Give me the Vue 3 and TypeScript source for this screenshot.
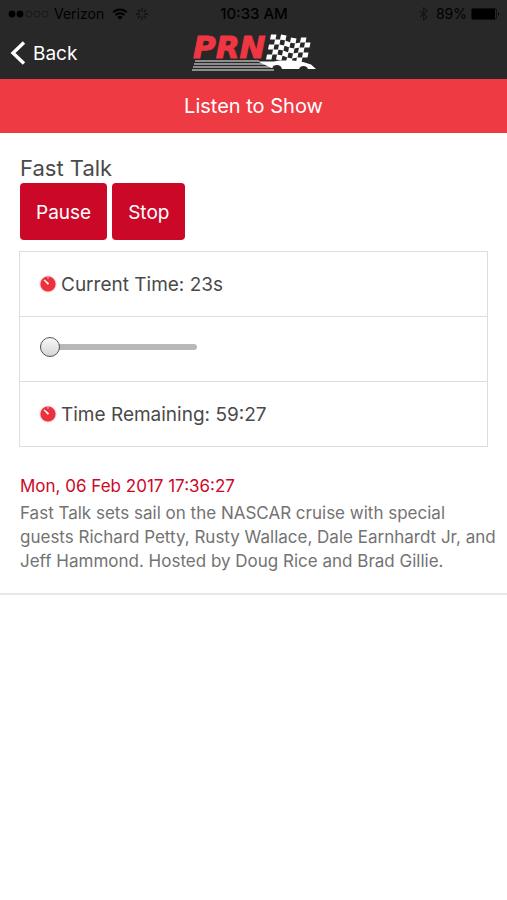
<script setup lang="ts">
import { computed, ref } from 'vue'

const duration = 3590
const elapsed = ref(23)

function format(seconds: number): string {
  const s = Math.max(0, seconds)
  if (s < 60) return `${s}s`
  return `${Math.floor(s / 60)}:${String(s % 60).padStart(2, '0')}`
}

const currentTime = computed(() => format(elapsed.value))
const remaining = computed(() => format(duration - elapsed.value))

const flagSquares = Array.from({ length: 40 }, (_, i) => ({ row: Math.floor(i / 8), col: i % 8 }))
  .filter(({ row, col }) => (row + col) % 2 === 0)
  .map(({ row, col }) => {
    const wave = [0, 0, 0, 1, 3, 4, 3, 3, 3]
    const x = 81 + col * 5 - row
    const y = 0.5 + row * 5
    const a = wave[col]
    const b = wave[col + 1]
    return `M${x} ${y + a}L${x + 5.5} ${y + b}L${x + 4.5} ${y + b + 5}L${x - 1} ${y + a + 5}Z`
  })
  .join('')
</script>

<template>
  <div class="screen">
    <header class="top">
      <div class="status">
        <div class="status-left">
          <svg class="signal" width="42" height="10" viewBox="0 0 42 10" aria-hidden="true">
            <circle cx="4" cy="5" r="3.4" fill="#000" />
            <circle cx="12" cy="5" r="3.4" fill="#000" />
            <g fill="none" stroke="#151515" stroke-width="0.8">
              <circle cx="21" cy="5" r="3" />
              <circle cx="29" cy="5" r="3" />
              <circle cx="37" cy="5" r="3" />
            </g>
          </svg>
          <span>Verizon</span>
          <svg class="wifi" width="16" height="12" viewBox="0 0 16 12" aria-hidden="true">
            <path d="M1.2 4.4a9.6 9.6 0 0 1 13.6 0M3.6 7a6.2 6.2 0 0 1 8.8 0" fill="none" stroke="#000" stroke-width="2" />
            <path d="M5.4 9a3.8 3.8 0 0 1 5.2 0L8 11.7z" fill="#000" />
          </svg>
          <svg width="12" height="12" viewBox="0 0 12 12" aria-hidden="true">
            <path d="M6 0v3.5M6 8.5V12M0 6h3.5M8.5 6H12M1.8 1.8l2.4 2.4M7.8 7.8l2.4 2.4M1.8 10.2l2.4-2.4M7.8 4.2l2.4-2.4" stroke="#111" stroke-width="1.3" />
          </svg>
        </div>
        <span class="clock">10:33 AM</span>
        <div class="status-right">
          <svg width="9" height="14" viewBox="0 0 9 14" aria-hidden="true">
            <path d="M1 4l7 6-3.5 3V1L8 4l-7 6" fill="none" stroke="#151515" stroke-width="1.1" />
          </svg>
          <span class="percent">89%</span>
          <svg width="29" height="12" viewBox="0 0 29 12" aria-hidden="true">
            <rect x="0.5" y="0.5" width="25" height="11" rx="1.5" fill="none" stroke="#111" />
            <rect x="1" y="1" width="23" height="10" fill="#000" />
            <path d="M27 4q2 2 0 4z" fill="#000" />
          </svg>
        </div>
      </div>
      <nav class="nav">
        <a class="back" href="#back">
          <svg width="16" height="24" viewBox="0 0 16 24" aria-hidden="true">
            <path d="M14 1.5L3 12l11 10.5" fill="none" stroke="#fff" stroke-width="3.4" />
          </svg>
          <span>Back</span>
        </a>
        <svg class="logo" width="128" height="38" viewBox="0 0 128 38" role="img" aria-label="PRN">
          <path d="M5 27h64M4 30h70M3 33h80M2 36h82" stroke="#8d8d8d" stroke-width="1.9" />
          <text class="logo-text" x="3" y="24">PRN</text>
          <path :d="flagSquares" fill="#fff" />
          <path d="M68 27.500h16l5-1h14l10 1.500 8 2.500 5 4.500h-8q-1-3-4.500-3t-4.500 3H92q-1-4-5-4t-5 3l-7-3z" fill="#fff" />
        </svg>
      </nav>
    </header>

    <h1 class="banner">Listen to Show</h1>

    <main class="content">
      <h2 class="show">Fast Talk</h2>
      <div class="controls">
        <button type="button" class="btn">Pause</button>
        <button type="button" class="btn">Stop</button>
      </div>
      <div class="panel">
        <div class="row">
          <svg width="18" height="18" viewBox="0 0 18 18" aria-hidden="true">
            <circle cx="9" cy="9" r="8.6" fill="#fcd3d5" />
            <circle cx="9" cy="9" r="7.6" fill="#ed303d" />
            <path d="M4.6 5.2l1-.8 4.6 4-1.4 1.4z" fill="#fff" />
            <path d="M9 1.8v2" stroke="#fbb" stroke-width="1" />
          </svg>
          <span>Current Time: {{ currentTime }}</span>
        </div>
        <div class="row">
          <input v-model.number="elapsed" class="seek" type="range" min="23" :max="duration" aria-label="Seek" />
        </div>
        <div class="row">
          <svg width="18" height="18" viewBox="0 0 18 18" aria-hidden="true">
            <circle cx="9" cy="9" r="8.6" fill="#fcd3d5" />
            <circle cx="9" cy="9" r="7.6" fill="#ed303d" />
            <path d="M4.6 5.2l1-.8 4.6 4-1.4 1.4z" fill="#fff" />
            <path d="M9 1.8v2" stroke="#fbb" stroke-width="1" />
          </svg>
          <span>Time Remaining: {{ remaining }}</span>
        </div>
      </div>
      <section class="details">
        <time class="date">Mon, 06 Feb 2017 17:36:27</time>
        <p class="summary">
          Fast Talk sets sail on the NASCAR cruise with special guests Richard Petty, Rusty Wallace, Dale Earnhardt Jr, and Jeff Hammond. Hosted by Doug Rice and Brad Gillie.
        </p>
      </section>
    </main>
  </div>
</template>

<style>
body {
  background: #fff;
}
</style>

<style scoped>
.screen {
  font-family: Inter, "Liberation Sans", sans-serif;
  color: #4a4a4a;
}
.top {
  background: #282828;
}
.status {
  display: grid;
  grid-template-columns: 1fr auto 1fr;
  align-items: center;
  height: 27px;
  padding: 0 7px 0 8px;
  font-size: 14px;
  color: #000;
}
.status-left,
.status-right {
  display: flex;
  align-items: center;
}
.signal {
  margin-right: 4px;
}
.wifi {
  margin: 0 8px;
}
.clock {
  font-size: 15px;
  font-weight: 500;
}
.status-right {
  justify-content: flex-end;
  gap: 4px;
}
.percent {
  margin-left: 4px;
}
.nav {
  display: grid;
  grid-template-columns: 1fr auto 1fr;
  align-items: center;
  height: 52px;
  padding: 0 10px;
}
.back {
  display: flex;
  align-items: center;
  gap: 7px;
  font-size: 19px;
  color: #fff;
  text-decoration: none;
}
.logo {
  overflow: visible;
}
.logo-text {
  font-family: "DejaVu Sans", sans-serif;
  font-size: 31px;
  font-weight: 700;
  font-style: italic;
  fill: #f03643;
  stroke: #f03643;
  stroke-width: 1px;
}
.banner {
  margin: 0;
  background: #ee3a43;
  color: #fff;
  font-size: 20px;
  font-weight: 400;
  line-height: 54px;
  text-align: center;
}
.content {
  padding: 20px 19px;
  border-bottom: 2px solid #e8e8e8;
}
.show {
  margin: 0;
  padding-left: 1px;
  font-size: 22px;
  font-weight: 400;
  line-height: 30px;
}
.controls {
  display: flex;
  gap: 5px;
  padding-left: 1px;
}
.btn {
  height: 57px;
  padding: 2px 16px 0;
  border: 0;
  border-radius: 4px;
  background: #cc0829;
  color: #fff;
  font: inherit;
  font-size: 19px;
}
.panel {
  margin-top: 11px;
  border: 1px solid #ddd;
}
.row {
  display: flex;
  align-items: center;
  gap: 4px;
  height: 64px;
  padding: 0 19px;
  font-size: 19px;
}
.row + .row {
  border-top: 1px solid #ddd;
}
.seek {
  appearance: none;
  width: 157px;
  height: 20px;
  margin: 0 0 4px 1px;
  background: transparent;
}
.seek::-webkit-slider-runnable-track {
  height: 6px;
  border-radius: 3px;
  background: #b8b8b8;
}
.seek::-webkit-slider-thumb {
  appearance: none;
  box-sizing: border-box;
  width: 20px;
  height: 20px;
  margin-top: -7px;
  border: 1px solid #555;
  border-radius: 50%;
  background: linear-gradient(#f8f8f8, #d6d6d6);
}
.details {
  margin-right: -12px;
  padding: 27px 0 0 1px;
}
.date {
  display: block;
  font-size: 17px;
  line-height: 24px;
  color: #cc0829;
}
.summary {
  margin: 3px 0 0;
  font-size: 17px;
  line-height: 24px;
  color: #737373;
}
</style>
